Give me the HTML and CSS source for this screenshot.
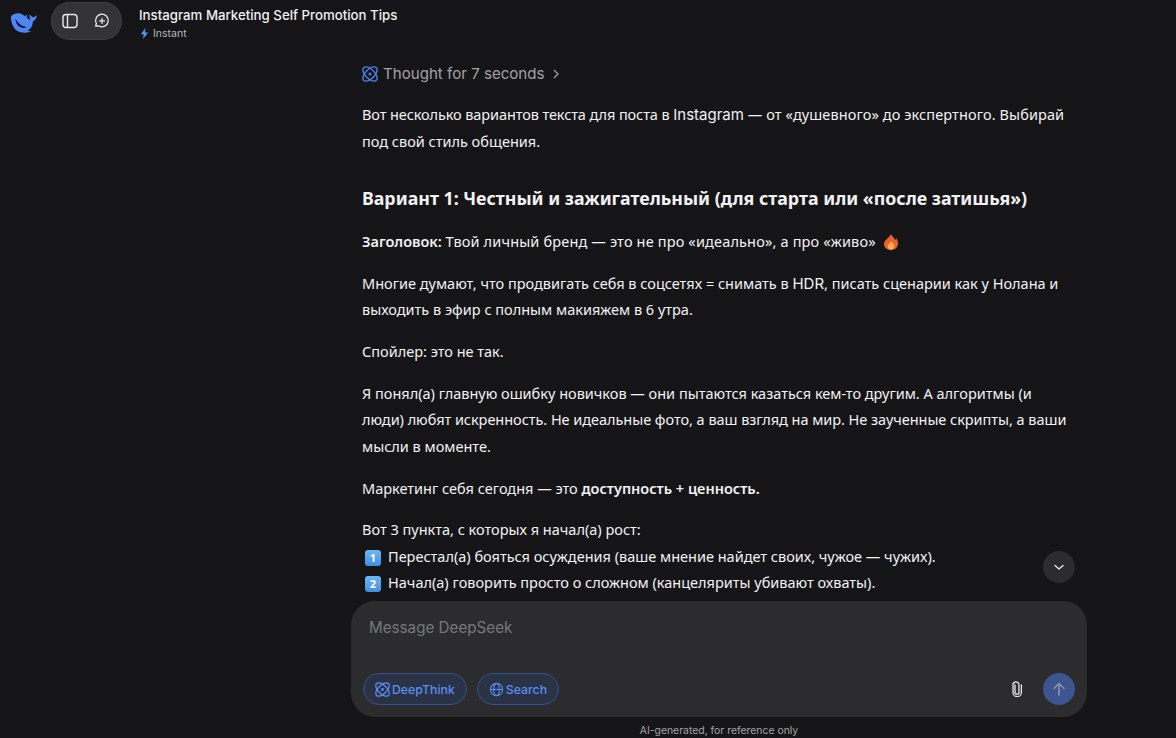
FILE: index.html
```html
<!DOCTYPE html>
<html lang="ru">
<head>
<meta charset="utf-8">
<title>Instagram Marketing Self Promotion Tips</title>
<link rel="stylesheet" href="styles.css">
</head>
<body>
<div class="app">
  <header class="topbar">
    <svg class="logo" viewBox="0 0 26 20" width="27" height="21"><path fill="#4f86f7" fill-rule="evenodd" d="M1 4C4 1 9 0 13 3c3 2 5 4 6.500 5-.5-2-1-4-.5-6 1 1.500 2 2.500 4 3 1-.5 2-1.500 3-2-.5 3-2 5-4 6 0 4-2 7-5 9 1.500.5 3 .5 4 .3-4 2.200-10 2.200-14-.3C3 15.500.5 9 1 4z M5 6c2 4 5 7.500 11 8.500-3 1.500-7 .5-9-2.500C6 10.500 5.300 8 5 6z M14.800 3.800a1 1 0 1 0 2 0 1 1 0 1 0-2 0z"/></svg>
    <div class="pill">
      <svg class="pill-icon" viewBox="0 0 18 18" width="18" height="18"><rect x="2" y="2.500" width="14" height="13" rx="3" fill="none" stroke="#e8e8ea" stroke-width="1.400"/><path d="M6.500 3v12" stroke="#e8e8ea" stroke-width="1.400"/></svg>
      <svg class="pill-icon" viewBox="0 0 18 18" width="18" height="18"><path d="M2.600 14l.8-2.500a6.300 6.300 0 1 1 2.500 2.500z" fill="none" stroke="#e8e8ea" stroke-width="1.300" stroke-linejoin="round"/><path d="M9 6.400v5M6.500 8.900h5" stroke="#e8e8ea" stroke-width="1.300" stroke-linecap="round"/></svg>
    </div>
    <div class="title-block">
      <div class="chat-title">Instagram Marketing Self Promotion Tips</div>
      <div class="mode"><svg viewBox="0 0 10 12" width="9" height="11"><path d="M6 0L1 6.800h3L3.400 12 9 4.800H5.600z" fill="#5b93f0"/></svg><span>Instant</span></div>
    </div>
  </header>

  <main class="scroller">
    <div class="thread">
      <div class="thought">
        <svg viewBox="0 0 16 16" width="16" height="16"><g fill="none" stroke="#4f7fe8" stroke-width="1.400"><ellipse cx="8" cy="8" rx="9" ry="4.600" transform="rotate(45 8 8)"/><ellipse cx="8" cy="8" rx="9" ry="4.600" transform="rotate(-45 8 8)"/></g><circle cx="8" cy="8" r="1.500" fill="#4f7fe8"/></svg>
        <span>Thought for 7 seconds</span>
        <svg viewBox="0 0 10 10" width="10" height="10"><path d="M3 1l4 4-4 4" fill="none" stroke="#a3a3a8" stroke-width="1.200"/></svg>
      </div>
      <p><span class="tight">Вот несколько вариантов текста для поста в</span> <span class="lat">Instagram</span> <span class="loose">— от «душевного» до экспертного. Выбирай</span> под свой стиль общения.</p>
      <h3>Вариант 1: Честный и зажигательный (для старта или «после затишья»)</h3>
      <p><strong>Заголовок:</strong> <span class="wide">Твой личный бренд — это не про «идеально», а про «живо»</span> <svg class="fire" viewBox="0 0 14 16" width="14" height="16"><path d="M7 0c.8 2.500 3 3.600 4.500 6 .500-.7.600-1.400.6-1.900C13.400 5.700 14 7.700 14 9.500 14 13.500 11 16 7 16s-7-2.500-7-6.300C0 6 4.800 4.500 7 0z" fill="#e8622c"/><path d="M7.300 7c.4 1.500 3 2.700 3 5.300 0 2-1.500 3.200-3.300 3.200s-3.300-1.200-3.300-3.100C3.700 10 6.800 9.500 7.300 7z" fill="#f6b04a"/></svg></p>
      <p>Многие думают, что продвигать себя в соцсетях = снимать в <span class="lat">HDR</span>, писать сценарии как у Нолана и выходить в эфир с полным макияжем в 6 утра.</p>
      <p>Спойлер: это не так.</p>
      <p>Я понял(а) главную ошибку новичков — они пытаются казаться кем-то другим. А алгоритмы (и <span class="snug">люди) любят искренность. Не идеальные фото, а ваш взгляд на мир. Не заученные скрипты, а ваши</span> мысли в моменте.</p>
      <p>Маркетинг себя сегодня — это <strong>доступность + ценность.</strong></p>
      <p>Вот 3 пункта, с которых я начал(а) рост:<br>
        <span class="key">1</span>Перестал(а) бояться осуждения (ваше мнение найдет своих, чужое — чужих).<br>
        <span class="key">2</span>Начал(а) говорить просто о сложном (канцеляриты убивают охваты).</p>
    </div>
    <button class="to-bottom" aria-label="Scroll to bottom"><svg viewBox="0 0 12 12" width="12" height="12"><path d="M2 4.500L6 8l4-3.500" fill="none" stroke="#e8e8ea" stroke-width="1.400" stroke-linecap="round" stroke-linejoin="round"/></svg></button>
  </main>

  <section class="composer">
    <div class="placeholder">Message DeepSeek</div>
    <div class="controls">
      <div class="chip"><svg viewBox="0 0 16 16" width="15" height="15"><g fill="none" stroke="#5b8def" stroke-width="1.300"><ellipse cx="8" cy="8" rx="9" ry="4.600" transform="rotate(45 8 8)"/><ellipse cx="8" cy="8" rx="9" ry="4.600" transform="rotate(-45 8 8)"/></g><circle cx="8" cy="8" r="1.500" fill="#5b8def"/></svg>DeepThink</div>
      <div class="chip"><svg viewBox="0 0 16 16" width="15" height="15"><g fill="none" stroke="#5b8def" stroke-width="1.200"><circle cx="8" cy="8" r="6.500"/><ellipse cx="8" cy="8" rx="3" ry="6.500"/><path d="M1.500 8h13"/></g></svg>Search</div>
      <div class="spacer"></div>
      <svg class="clip" viewBox="0 0 14 16" width="14" height="16"><path d="M5 4v7.200a2 2 0 0 0 4 0V3.800a3 3 0 0 0-6 0v7.600a4.200 4.200 0 0 0 8.400 0V4" fill="none" stroke="#e8e8ea" stroke-width="1.300" stroke-linecap="round"/></svg>
      <div class="send"><svg viewBox="0 0 16 16" width="16" height="16"><path d="M8 14V2.500M3 7.500l5-5 5 5" fill="none" stroke="#8a93a8" stroke-width="1.600" stroke-linecap="round" stroke-linejoin="round"/></svg></div>
    </div>
  </section>
  <footer class="note">AI-generated, for reference only</footer>
</div>
</body>
</html>
```
FILE: styles.css
```css
* { box-sizing: border-box; }
html, body { margin: 0; height: 100%; }
body {
  background: #151517;
  color: #f2f2f4;
  font-family: "Noto Sans", sans-serif;
  overflow: hidden;
}
.app {
  display: flex;
  flex-direction: column;
  height: 738px;
}
.topbar {
  display: flex;
  align-items: center;
  height: 42px;
  flex: none;
  padding: 0 0 0 10px;
}
.logo { flex: none; margin-right: 14px; margin-top: 2px; }
.pill {
  display: flex;
  align-items: center;
  gap: 14px;
  width: 71px;
  height: 38px;
  padding: 0 0 0 10px;
  border-radius: 19px;
  background: #333336;
  box-shadow: inset 0 0 0 1px #3d3d40;
  flex: none;
}
.pill-icon { flex: none; }
.title-block {
  margin-left: 17px;
  padding-top: 5px;
  font-family: Inter, sans-serif;
}
.chat-title {
  font-size: 13.25px;
  font-weight: 500;
  line-height: 17px;
  color: #f0f0f2;
}
.mode {
  display: flex;
  align-items: center;
  gap: 4px;
  margin-top: 3px;
  padding-left: 1px;
  font-size: 10.5px;
  line-height: 14px;
  color: #b4b7bd;
}
.scroller {
  flex: 1;
  min-height: 0;
  overflow: hidden;
  position: relative;
}
.thread {
  width: 714px;
  margin-left: 362px;
  padding-top: 18px;
  font-size: 14.5px;
  line-height: 26.6px;
}
.thought {
  display: flex;
  align-items: center;
  gap: 5px;
  height: 28px;
  margin-bottom: 13px;
  font-family: Inter, sans-serif;
  font-size: 15.1px;
  color: #a3a3a8;
}
.thought svg:last-child { margin-left: 2px; }
.thread p { margin: 0 0 15.1px; }
.thread strong { font-weight: 600; }
.thread h3 {
  margin: 31px 0 15.8px;
  font-size: 17.8px;
  font-weight: 700;
  line-height: 27px;
}
.lat { font-family: Inter, sans-serif; font-size: 15px; line-height: 1; }
.tight { letter-spacing: -.1px; }
.loose { letter-spacing: .1px; }
.wide { letter-spacing: .16px; }
.snug { letter-spacing: -.04px; }
.fire { vertical-align: -3px; margin-left: 4px; }
.key {
  display: inline-block;
  width: 16px;
  height: 16px;
  margin: 0 7px 0 3px;
  border-radius: 3px;
  background: linear-gradient(#6db6f5, #3f8fe6);
  color: #fff;
  font-size: 11px;
  font-weight: 700;
  line-height: 16px;
  text-align: center;
  vertical-align: 0;
}
.to-bottom {
  position: absolute;
  left: 1043px;
  top: 509px;
  display: flex;
  align-items: center;
  justify-content: center;
  width: 32px;
  height: 32px;
  padding: 0;
  border: 0;
  border-radius: 50%;
  background: #2c2c2e;
}
.composer {
  flex: none;
  width: 736px;
  height: 116px;
  margin-left: 351px;
  padding: 16px 12px 12px;
  border-radius: 24px;
  background: #2c2c2e;
  display: flex;
  flex-direction: column;
  justify-content: space-between;
  font-family: Inter, sans-serif;
}
.placeholder {
  padding-left: 6px;
  font-size: 15.2px;
  line-height: 22px;
  color: #77777c;
}
.controls {
  display: flex;
  align-items: center;
  gap: 10px;
}
.chip {
  display: flex;
  align-items: center;
  gap: 2px;
  height: 32px;
  padding: 0 11px;
  border: 1px solid #35508a;
  border-radius: 16px;
  background: #2a3346;
  color: #5b8def;
  font-size: 12.3px;
  font-weight: 500;
}
.spacer { flex: 1; }
.clip { margin-right: 9px; }
.send {
  display: flex;
  align-items: center;
  justify-content: center;
  width: 32px;
  height: 32px;
  border-radius: 50%;
  background: #3c5490;
}
.note {
  flex: none;
  margin-top: 7px;
  text-align: center;
  margin-left: 351px;
  width: 736px;
  font-family: Inter, sans-serif;
  font-size: 10.4px;
  line-height: 14px;
  color: #a3a3a8;
}
```
